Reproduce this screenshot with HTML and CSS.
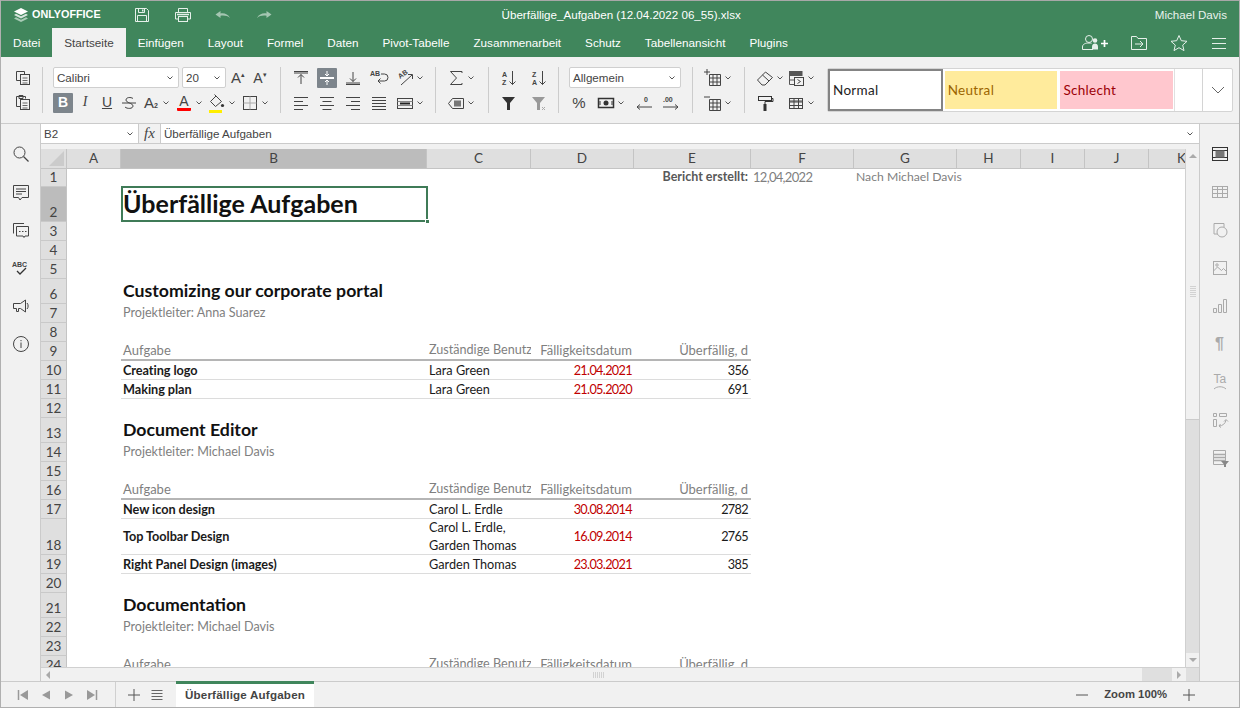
FILE: index.html
```html
<!DOCTYPE html>
<html lang="de">
<head>
<meta charset="utf-8">
<title>Überfällige Aufgaben</title>
<link rel="stylesheet" href="styles.css">
</head>
<body>
<svg class="defs" aria-hidden="true">
  <symbol id="caret" viewBox="0 0 10 20"><path d="M2.5 8.5 5 11l2.5-2.5" fill="none" stroke="#555" stroke-width="1"/></symbol>
  <symbol id="copy" viewBox="0 0 20 20"><path d="M11.500 6V3.500h-8v9H7" fill="none" stroke="#444"/><rect x="7.500" y="6.500" width="9" height="10" fill="#f1f1f1" stroke="#444"/><path d="M9.500 10h5M9.500 12.500h5M9.500 15h5" stroke="#666"/></symbol>
  <symbol id="paste" viewBox="0 0 20 20"><path d="M12.500 5.500v-2h-9v10H7M6 5.500h4V2.500H6z" fill="none" stroke="#444"/><rect x="7.500" y="6.500" width="9" height="10" fill="#f1f1f1" stroke="#444"/><path d="M9.500 10h5M9.500 12.500h5M9.500 15h5" stroke="#666"/></symbol>
  <symbol id="strike" viewBox="0 0 20 20"><path d="M14 5.500c-2-1.500-7-1.500-7 1.500 0 3 7 3 7 6 0 3-6 3-8 1M3 10h14" fill="none" stroke="#444"/></symbol>
  <symbol id="fill" viewBox="0 0 20 20"><path d="M3.500 8.500 9 3l5.500 5.500-6 5z" fill="none" stroke="#444"/><path d="m9 3-1.500-1.500" stroke="#444"/><circle cx="15.500" cy="12.500" r="1.600" fill="#333"/><rect x="2" y="17" width="13" height="3" fill="#ffee00"/></symbol>
  <symbol id="borders" viewBox="0 0 20 20"><rect x="3.500" y="3.500" width="13" height="13" fill="none" stroke="#444"/><path d="M10 3.500v13M3.500 10h13" stroke="#aaa"/></symbol>
  <symbol id="atop" viewBox="0 0 20 20"><path d="M3 3.500h14M3 5h14M10 16V6.500M7 9.500l3-3 3 3" fill="none" stroke="#444"/></symbol>
  <symbol id="amid" viewBox="0 0 20 20"><path d="M3 9.500h14M3 10.500h14M10 3v5M10 17v-5M8 6l2 2 2-2M8 14l2-2 2 2" fill="none" stroke="#fff"/></symbol>
  <symbol id="abot" viewBox="0 0 20 20"><path d="M3 16.500h14M3 15h14M10 4v9.500M7 10.500l3 3 3-3" fill="none" stroke="#444"/></symbol>
  <symbol id="al" viewBox="0 0 20 20"><path d="M3 4.500h14M3 8.500h9M3 12.500h14M3 16.500h9" stroke="#444"/></symbol>
  <symbol id="ac" viewBox="0 0 20 20"><path d="M3 4.500h14M5.500 8.500h9M3 12.500h14M5.500 16.500h9" stroke="#444"/></symbol>
  <symbol id="ar" viewBox="0 0 20 20"><path d="M3 4.500h14M8 8.500h9M3 12.500h14M8 16.500h9" stroke="#444"/></symbol>
  <symbol id="aj" viewBox="0 0 20 20"><path d="M3 4.500h14M3 7.500h14M3 10.500h14M3 13.500h14M3 16.500h14" stroke="#444"/></symbol>
  <symbol id="merge" viewBox="0 0 20 20"><rect x="2.500" y="5.500" width="15" height="10" fill="none" stroke="#444"/><path d="M2.500 8.500h15M2.500 12.500h15" stroke="#888"/><path d="M5 10.500h10" stroke="#222" stroke-width="2"/></symbol>
  <symbol id="sum" viewBox="0 0 20 20"><path d="M16 5V3.500H4.500L10.500 10l-6 6.500H16V15" fill="none" stroke="#444"/></symbol>
  <symbol id="named" viewBox="0 0 20 20"><path d="M6.500 5.500h11v10h-11L2.500 10.500z" fill="none" stroke="#444"/><rect x="8" y="7.500" width="7" height="6" fill="#777"/></symbol>
  <symbol id="filter" viewBox="0 0 20 20"><path d="M3 4h13l-5 6v7H8v-7z" fill="#333"/></symbol>
  <symbol id="unfilter" viewBox="0 0 20 20"><path d="M3 4h13l-5 6v7H8v-7z" fill="#999"/><path d="m13 14 3 3M16 14l-3 3" stroke="#aaa"/></symbol>
  <symbol id="money" viewBox="0 0 20 20"><rect x="2.500" y="5.500" width="15" height="9" fill="none" stroke="#333" stroke-width="1.500"/><circle cx="10" cy="10" r="2.500" fill="#333"/><path d="M4 8v4M16 8v4" stroke="#333"/></symbol>
  <symbol id="insc" viewBox="0 0 20 20"><path d="M6.500 6.500h11v11h-11zM10 6.500v11M14 6.500v11M6.500 10h11M6.500 14h11" fill="none" stroke="#444"/><path d="M1 4h6M4 1v6" stroke="#444"/></symbol>
  <symbol id="delc" viewBox="0 0 20 20"><path d="M6.500 6.500h11v11h-11zM10 6.500v11M14 6.500v11M6.500 10h11M6.500 14h11" fill="none" stroke="#444"/><path d="M1 4h6" stroke="#444"/></symbol>
  <symbol id="eraser" viewBox="0 0 20 20"><path d="m2.500 12 8-8 7 5.500-7.500 7.500H7z" fill="none" stroke="#444"/><path d="M7.500 7 14 13" stroke="#444"/></symbol>
  <symbol id="cond" viewBox="0 0 20 20"><path d="M3 3h13v5H3z" fill="#555"/><path d="M3.500 3v13.500h5M16 3v5M3.500 12h5" fill="none" stroke="#555"/><rect x="8.500" y="9.500" width="9" height="8" fill="#f1f1f1" stroke="#444"/><path d="m11.500 11.500 3 2-3 2" fill="none" stroke="#444"/></symbol>
  <symbol id="paint" viewBox="0 0 20 20"><rect x="3.500" y="3.500" width="13" height="4" fill="none" stroke="#333"/><path d="M16.500 5.500h1.500v3h-8V11" fill="none" stroke="#333"/><rect x="8.500" y="11" width="3" height="7" fill="#333"/></symbol>
  <symbol id="table" viewBox="0 0 20 20"><rect x="3.500" y="5.500" width="13" height="10" fill="none" stroke="#444"/><path d="M3.500 8h13v1H3.500zM8 5.500v10M12.500 5.500v10M3.500 12.500h13" fill="none" stroke="#444"/></symbol>

  <symbol id="logo" viewBox="0 0 16 16"><path d="M8 1 1 4.500 8 8l7-3.500z" fill="#fff"/><path d="M3 6.800 1 8l7 3.500L15 8l-2-1.200L8 9.300z" fill="#d7e6dd"/><path d="M3 10.300 1 11.500 8 15l7-3.500-2-1.200-5 2.500z" fill="#a9cbb6"/></symbol>
  <symbol id="save" viewBox="0 0 20 20"><path d="M3.500 3.500h11l2 2v11h-13z" fill="none" stroke="#e6f0ea"/><path d="M6.500 3.500v4h6v-4M5.500 16.500v-6h9v6" fill="none" stroke="#e6f0ea"/><path d="M10 4.500h1.500v2H10z" fill="#e6f0ea"/></symbol>
  <symbol id="print" viewBox="0 0 20 20"><path d="M5.500 7V3.500h9V7M5.500 14h-3V7.500h15V14h-3" fill="none" stroke="#e6f0ea"/><rect x="5.500" y="11.500" width="9" height="5" fill="none" stroke="#e6f0ea"/><path d="M4 9.500h12" stroke="#e6f0ea" stroke-width="1.500"/></symbol>
  <symbol id="undo" viewBox="0 0 20 20"><path d="M2.500 9.500 7.500 6v2.400c4-.6 7.500.7 9.500 4.600-2.500-2-5.500-2.800-9.500-2.200V13z" fill="#a5c6b2"/></symbol>
  <symbol id="redo" viewBox="0 0 20 20"><path d="M17.500 9.500 12.500 6v2.400c-4-.6-7.500.7-9.500 4.600 2.500-2 5.500-2.800 9.500-2.200V13z" fill="#a5c6b2"/></symbol>
  <symbol id="adduser" viewBox="0 0 28 20"><circle cx="8" cy="6" r="3.500" fill="none" stroke="#e6f0ea"/><path d="M1.500 16.500V14c0-3 3-4 6.500-4 1 0 2 .1 2.500.3M1.500 16.500H12" fill="none" stroke="#e6f0ea"/><circle cx="14" cy="7.500" r="2.300" fill="#e6f0ea"/><path d="M11 16.500v-3c0-2 1.500-3 3-3s3 1 3 3v3z" fill="#e6f0ea"/><path d="M20 10.500h7M23.500 7v7" stroke="#fff" stroke-width="1.700"/></symbol>
  <symbol id="folder" viewBox="0 0 20 20"><path d="M2.500 16.500v-13h5l1.500 2h8.500v11z" fill="none" stroke="#e6f0ea"/><path d="M6 11h8M11 8l3 3-3 3" fill="none" stroke="#e6f0ea"/></symbol>
  <symbol id="star" viewBox="0 0 20 20"><path d="m10 2.500 2.300 5.200 5.700.6-4.300 3.800 1.300 5.500-5-2.900-5 2.900 1.300-5.500L2 8.300l5.700-.6z" fill="none" stroke="#e6f0ea"/></symbol>
  <symbol id="menu" viewBox="0 0 20 20"><path d="M3 5.500h14M3 10.500h14M3 15.500h14" stroke="#e6f0ea"/></symbol>

  <symbol id="search" viewBox="0 0 20 20"><circle cx="8.500" cy="8.500" r="5.500" fill="none" stroke="#444"/><path d="m12.500 12.500 5 5" stroke="#444" stroke-width="1.200"/></symbol>
  <symbol id="comment" viewBox="0 0 20 20"><path d="M2.500 3.500h15v12H11l-2 2.500-1.500-2.500h-5z" fill="none" stroke="#444"/><path d="M5 7h10M5 9.500h10M5 12h6" stroke="#444"/></symbol>
  <symbol id="chat" viewBox="0 0 20 20"><path d="M13 3.500H2.500v10" fill="none" stroke="#444"/><path d="M5.500 6.500h12v9.500h-3.500l-1 1.500-1-1.500H5.500z" fill="none" stroke="#444"/><path d="M8 11.500h2M11 11.500h2M14 11.500h2" stroke="#444" stroke-dasharray="1.500 1"/></symbol>
  <symbol id="mega" viewBox="0 0 20 20"><path d="M2.500 7.500h7l5-3.500v12l-5-3.500h-2v3h-2v-3h-3z" fill="none" stroke="#444"/><path d="M16 7c1.500 1.500 1.500 4.500 0 6" fill="none" stroke="#444"/></symbol>
  <symbol id="info" viewBox="0 0 20 20"><circle cx="10" cy="10" r="7.500" fill="none" stroke="#444"/><path d="M10 8.500V14M10 6v1.200" stroke="#444"/></symbol>

  <symbol id="rcell" viewBox="0 0 20 20"><rect x="2.500" y="3.500" width="15" height="13" fill="none" stroke="#333"/><path d="M2.500 6.500h15M2.500 13.500h15" stroke="#333"/><rect x="5.500" y="6.500" width="9" height="7" fill="#777"/></symbol>
  <symbol id="rtable" viewBox="0 0 20 20"><rect x="2.500" y="4.500" width="15" height="11" fill="none" stroke="#aaa"/><path d="M2.500 7.500h15M2.500 11.500h15M7.500 4.500v11M12.500 4.500v11" stroke="#aaa"/></symbol>
  <symbol id="rshape" viewBox="0 0 20 20"><path d="M8 14H4V3.500h10V7" fill="none" stroke="#aaa"/><circle cx="12" cy="12" r="5" fill="#f1f1f1" stroke="#aaa"/></symbol>
  <symbol id="rimage" viewBox="0 0 20 20"><rect x="3.500" y="3.500" width="13" height="13" fill="none" stroke="#aaa"/><path d="m3.500 13 4-4 4 3.500 2-2 3 3" fill="none" stroke="#aaa"/><circle cx="7" cy="7" r="1.200" fill="none" stroke="#aaa"/></symbol>
  <symbol id="rchart" viewBox="0 0 20 20"><path d="M3.500 12.500h3v4h-3zM8.500 8.500h3v8h-3zM13.500 3.500h3v13h-3z" fill="none" stroke="#aaa"/></symbol>
  <symbol id="rpivot" viewBox="0 0 20 20"><path d="M3.500 3.500h3v3h-3zM9.500 3.500h7v3h-7zM3.500 9.500h3v7h-3z" fill="none" stroke="#aaa"/><path d="M9 16a7 7 0 0 0 7-6M14 11.500l2-2 2 2M10.500 14 9 16l2 1.500" fill="none" stroke="#aaa"/></symbol>
  <symbol id="rslicer" viewBox="0 0 20 20"><path d="M3.500 2.500h12v14h-12z" fill="none" stroke="#aaa"/><path d="M3.500 6.500h12M3.500 9.500h12M3.500 12.500h12" stroke="#aaa" stroke-width="1.300"/><path d="M11 13h8l-3 3.500V19h-2v-2.500z" fill="#888"/></symbol>

  <symbol id="nfirst" viewBox="0 0 12 12"><path d="M1.500 1v10" stroke="#999" stroke-width="1.500"/><path d="M11 1v10L3 6z" fill="#999"/></symbol>
  <symbol id="nprev" viewBox="0 0 12 12"><path d="M10 1.500v9L2 6z" fill="#999"/></symbol>
  <symbol id="nnext" viewBox="0 0 12 12"><path d="M2 1.500v9L10 6z" fill="#999"/></symbol>
  <symbol id="nlast" viewBox="0 0 12 12"><path d="M10.500 1v10" stroke="#999" stroke-width="1.500"/><path d="M1 1v10l8-5z" fill="#999"/></symbol>
  <symbol id="plus" viewBox="0 0 14 14"><path d="M7 1v12M1 7h12" stroke="#555"/></symbol>
  <symbol id="list" viewBox="0 0 14 14"><path d="M1.500 2.500h11M1.500 5.500h11M1.500 8.500h11M1.500 11.500h11" stroke="#666"/></symbol>
  <symbol id="minus" viewBox="0 0 14 14"><path d="M1 7h12" stroke="#555"/></symbol>
</svg>

<div class="app">
  <header class="title">
    <div class="brand"><svg class="logo"><use href="#logo"/></svg><span>ONLYOFFICE</span></div>
    <div class="quick">
      <svg class="ic"><use href="#save"/></svg>
      <svg class="ic"><use href="#print"/></svg>
      <svg class="ic"><use href="#undo"/></svg>
      <svg class="ic"><use href="#redo"/></svg>
    </div>
    <div class="docname">Überfällige_Aufgaben (12.04.2022 06_55).xlsx</div>
    <div class="user">Michael Davis</div>
  </header>

  <nav class="tabs">
    <span class="tab">Datei</span>
    <span class="tab on">Startseite</span>
    <span class="tab">Einfügen</span>
    <span class="tab">Layout</span>
    <span class="tab">Formel</span>
    <span class="tab">Daten</span>
    <span class="tab">Pivot-Tabelle</span>
    <span class="tab">Zusammenarbeit</span>
    <span class="tab">Schutz</span>
    <span class="tab">Tabellenansicht</span>
    <span class="tab">Plugins</span>
    <div class="tabtools">
      <svg class="ic wide"><use href="#adduser"/></svg>
      <svg class="ic"><use href="#folder"/></svg>
      <svg class="ic"><use href="#star"/></svg>
      <svg class="ic"><use href="#menu"/></svg>
    </div>
  </nav>

  <section class="toolbar">
    <div class="grp g1">
      <div class="tr"><svg class="ic"><use href="#copy"/></svg></div>
      <div class="tr"><svg class="ic"><use href="#paste"/></svg></div>
    </div>
    <i class="sep"></i>
    <div class="grp g2">
      <div class="tr">
        <div class="combo font"><span>Calibri</span><svg class="car"><use href="#caret"/></svg></div>
        <div class="combo size"><span>20</span><svg class="car"><use href="#caret"/></svg></div>
        <span class="b glyph">A<sup>▴</sup></span>
        <span class="b glyph small">A<sup>▾</sup></span>
      </div>
      <div class="tr">
        <span class="b letter active strong">B</span>
        <span class="b letter ital">I</span>
        <span class="b letter under">U</span>
        <svg class="ic"><use href="#strike"/></svg>
        <span class="sp"><span class="b glyph sub">A<sub>2</sub></span><svg class="car"><use href="#caret"/></svg></span>
        <span class="sp"><span class="b glyph red">A</span><svg class="car"><use href="#caret"/></svg></span>
        <span class="sp"><svg class="ic"><use href="#fill"/></svg><svg class="car"><use href="#caret"/></svg></span>
        <span class="sp"><svg class="ic"><use href="#borders"/></svg><svg class="car"><use href="#caret"/></svg></span>
      </div>
    </div>
    <i class="sep"></i>
    <div class="grp g3">
      <div class="tr">
        <svg class="ic"><use href="#atop"/></svg>
        <span class="b active"><svg class="ic"><use href="#amid"/></svg></span>
        <svg class="ic"><use href="#abot"/></svg>
        <svg class="ic" viewBox="0 0 20 20"><text x="1" y="8" class="tiny">AB</text><path d="M12 6h3.500a3 3 0 0 1 0 7H9M11.500 10.500 9 13l2.500 2.500" fill="none" stroke="#444"/></svg>
        <span class="sp"><svg class="ic" viewBox="0 0 20 20"><text class="tiny" transform="translate(5 11) rotate(-35)">AB</text><path d="M6 17 17 7M13 6.500h4.500V11" fill="none" stroke="#444"/></svg><svg class="car"><use href="#caret"/></svg></span>
      </div>
      <div class="tr">
        <svg class="ic"><use href="#al"/></svg>
        <svg class="ic"><use href="#ac"/></svg>
        <svg class="ic"><use href="#ar"/></svg>
        <svg class="ic"><use href="#aj"/></svg>
        <span class="sp"><svg class="ic"><use href="#merge"/></svg><svg class="car"><use href="#caret"/></svg></span>
      </div>
    </div>
    <i class="sep"></i>
    <div class="grp g4">
      <div class="tr"><span class="sp"><svg class="ic"><use href="#sum"/></svg><svg class="car"><use href="#caret"/></svg></span></div>
      <div class="tr"><span class="sp"><svg class="ic"><use href="#named"/></svg><svg class="car"><use href="#caret"/></svg></span></div>
    </div>
    <i class="sep"></i>
    <div class="grp g5">
      <div class="tr">
        <svg class="ic" viewBox="0 0 20 20"><text x="3" y="9" class="tiny">A</text><text x="3" y="17" class="tiny">Z</text><path d="M13.500 3v13.500M10.500 13.500l3 3 3-3" fill="none" stroke="#444"/></svg>
        <svg class="ic" viewBox="0 0 20 20"><text x="3" y="9" class="tiny">Z</text><text x="3" y="17" class="tiny">A</text><path d="M13.500 3v13.500M10.500 13.500l3 3 3-3" fill="none" stroke="#444"/></svg>
      </div>
      <div class="tr"><svg class="ic"><use href="#filter"/></svg><svg class="ic"><use href="#unfilter"/></svg></div>
    </div>
    <i class="sep"></i>
    <div class="grp g6">
      <div class="tr"><div class="combo fmt"><span>Allgemein</span><svg class="car"><use href="#caret"/></svg></div></div>
      <div class="tr numrow">
        <span class="b pct">%</span>
        <span class="sp"><svg class="ic"><use href="#money"/></svg><svg class="car"><use href="#caret"/></svg></span>
        <svg class="ic" viewBox="0 0 20 20"><text x="10" y="9" class="tiny">0</text><path d="M18 14H3M6 11.500 3 14l3 2.500" fill="none" stroke="#444"/></svg>
        <svg class="ic" viewBox="0 0 20 20"><text x="2" y="9" class="tiny">.00</text><path d="M2 14h15M14 11.500l3 2.500-3 2.500" fill="none" stroke="#444"/></svg>
      </div>
    </div>
    <i class="sep"></i>
    <div class="grp g7">
      <div class="tr"><span class="sp"><svg class="ic"><use href="#insc"/></svg><svg class="car"><use href="#caret"/></svg></span></div>
      <div class="tr"><span class="sp"><svg class="ic"><use href="#delc"/></svg><svg class="car"><use href="#caret"/></svg></span></div>
    </div>
    <i class="sep"></i>
    <div class="grp g8">
      <div class="tr"><span class="sp"><svg class="ic"><use href="#eraser"/></svg><svg class="car"><use href="#caret"/></svg></span><span class="sp"><svg class="ic"><use href="#cond"/></svg><svg class="car"><use href="#caret"/></svg></span></div>
      <div class="tr"><span class="sp"><svg class="ic"><use href="#paint"/></svg><i class="nocar"></i></span><span class="sp"><svg class="ic"><use href="#table"/></svg><svg class="car"><use href="#caret"/></svg></span></div>
    </div>
    <div class="styles">
      <div class="st normal">Normal</div>
      <div class="st neutral">Neutral</div>
      <div class="st bad">Schlecht</div>
      <div class="st blank"></div>
      <div class="st more"><svg viewBox="0 0 14 8"><path d="m1 1 6 6 6-6" fill="none" stroke="#666"/></svg></div>
    </div>
  </section>

  <main class="main">
    <aside class="side left">
      <svg class="ic"><use href="#search"/></svg>
      <svg class="ic"><use href="#comment"/></svg>
      <svg class="ic"><use href="#chat"/></svg>
      <svg class="ic" viewBox="0 0 20 20"><text x="1" y="9" class="tiny">ABC</text><path d="m6 13 3 3 6-6" fill="none" stroke="#333" stroke-width="1.300"/></svg>
      <svg class="ic"><use href="#mega"/></svg>
      <svg class="ic"><use href="#info"/></svg>
    </aside>

    <div class="center">
      <div class="formula">
        <div class="namebox"><span>B2</span><svg class="car"><use href="#caret"/></svg></div>
        <div class="fx">fx</div>
        <div class="input"><span>Überfällige Aufgaben</span><svg class="car"><use href="#caret"/></svg></div>
      </div>
      <div class="work">
        <div class="sheet">
          <div class="row head">
            <div class="corner"></div>
            <div class="ch">A</div><div class="ch sel">B</div><div class="ch">C</div><div class="ch">D</div><div class="ch">E</div><div class="ch">F</div><div class="ch">G</div><div class="ch">H</div><div class="ch">I</div><div class="ch">J</div><div class="ch kk">K</div>
          </div>
          <div class="row"><div class="rh">1</div><div></div><div></div><div></div><div></div><div class="c right top meta strong">Bericht erstellt:</div><div class="c top meta num">12,04,2022</div><div class="c top meta wide-left">Nach Michael Davis</div></div>
          <div class="row r35"><div class="rh sel">2</div><div></div><div class="c active-cell"><span class="h1">Überfällige Aufgaben</span><i class="handle"></i></div></div>
          <div class="row"><div class="rh">3</div></div>
          <div class="row"><div class="rh">4</div></div>
          <div class="row"><div class="rh">5</div></div>
          <div class="row r25"><div class="rh">6</div><div></div><div class="c h2">Customizing our corporate portal</div></div>
          <div class="row"><div class="rh">7</div><div></div><div class="c lead">Projektleiter: Anna Suarez</div></div>
          <div class="row"><div class="rh">8</div></div>
          <div class="row"><div class="rh">9</div><div></div><div class="c th">Aufgabe</div><div class="c th clip">Zuständige Benutzer</div><div class="c th right">Fälligkeitsdatum</div><div class="c th right">Überfällig, d</div></div>
          <div class="row"><div class="rh">10</div><div></div><div class="c td strong">Creating logo</div><div class="c td">Lara Green</div><div class="c td right late num">21.04.2021</div><div class="c td right num">356</div></div>
          <div class="row"><div class="rh">11</div><div></div><div class="c td strong">Making plan</div><div class="c td">Lara Green</div><div class="c td right late num">21.05.2020</div><div class="c td right num">691</div></div>
          <div class="row"><div class="rh">12</div></div>
          <div class="row r25"><div class="rh">13</div><div></div><div class="c h2">Document Editor</div></div>
          <div class="row"><div class="rh">14</div><div></div><div class="c lead">Projektleiter: Michael Davis</div></div>
          <div class="row"><div class="rh">15</div></div>
          <div class="row"><div class="rh">16</div><div></div><div class="c th">Aufgabe</div><div class="c th clip">Zuständige Benutzer</div><div class="c th right">Fälligkeitsdatum</div><div class="c th right">Überfällig, d</div></div>
          <div class="row"><div class="rh">17</div><div></div><div class="c td strong">New icon design</div><div class="c td">Carol L. Erdle</div><div class="c td right late num">30.08.2014</div><div class="c td right num">2782</div></div>
          <div class="row r36"><div class="rh">18</div><div></div><div class="c td strong mid">Top Toolbar Design</div><div class="c td multi">Carol L. Erdle,<br>Garden Thomas</div><div class="c td right late mid num">16.09.2014</div><div class="c td right mid num">2765</div></div>
          <div class="row"><div class="rh">19</div><div></div><div class="c td strong">Right Panel Design (images)</div><div class="c td">Garden Thomas</div><div class="c td right late num">23.03.2021</div><div class="c td right num">385</div></div>
          <div class="row"><div class="rh">20</div></div>
          <div class="row r25"><div class="rh">21</div><div></div><div class="c h2">Documentation</div></div>
          <div class="row"><div class="rh">22</div><div></div><div class="c lead">Projektleiter: Michael Davis</div></div>
          <div class="row"><div class="rh">23</div></div>
          <div class="row"><div class="rh">24</div><div></div><div class="c th">Aufgabe</div><div class="c th clip">Zuständige Benutzer</div><div class="c th right">Fälligkeitsdatum</div><div class="c th right">Überfällig, d</div></div>
        </div>
        <div class="vscroll">
          <div class="sbtn"><i class="tri up"></i></div>
          <div class="vthumb"><i class="grip v"></i></div>
          <div class="vtrack"></div>
          <div class="sbtn"><i class="tri down"></i></div>
        </div>
      </div>
      <div class="hscroll">
        <div class="sbtn h"><i class="tri lft"></i></div>
        <div class="hthumb"><i class="grip h"></i></div>
        <div class="htrack"></div>
        <div class="sbtn h"><i class="tri rgt"></i></div>
        <div class="hend"></div>
      </div>
    </div>

    <aside class="side right-side">
      <svg class="ic"><use href="#rcell"/></svg>
      <svg class="ic"><use href="#rtable"/></svg>
      <svg class="ic"><use href="#rshape"/></svg>
      <svg class="ic"><use href="#rimage"/></svg>
      <svg class="ic"><use href="#rchart"/></svg>
      <span class="pilcrow">¶</span>
      <svg class="ic" viewBox="0 0 20 20"><text x="3.500" y="11" class="ta">Ta</text><path d="M4 17c3-3 9-3 12 0" fill="none" stroke="#aaa"/></svg>
      <svg class="ic"><use href="#rpivot"/></svg>
      <svg class="ic"><use href="#rslicer"/></svg>
    </aside>
  </main>

  <footer class="status">
    <div class="nav">
      <svg class="nb"><use href="#nfirst"/></svg>
      <svg class="nb"><use href="#nprev"/></svg>
      <svg class="nb"><use href="#nnext"/></svg>
      <svg class="nb"><use href="#nlast"/></svg>
    </div>
    <div class="sheetbtns">
      <svg class="nb big"><use href="#plus"/></svg>
      <svg class="nb big"><use href="#list"/></svg>
    </div>
    <div class="sheettab">Überfällige Aufgaben</div>
    <div class="zoom">
      <svg class="nb big"><use href="#minus"/></svg>
      <span class="zlabel">Zoom 100%</span>
      <svg class="nb big"><use href="#plus"/></svg>
    </div>
  </footer>
</div>
</body>
</html>
```
FILE: styles.css
```css
* { box-sizing: border-box; }
html, body { margin: 0; padding: 0; }
body { width: 1240px; height: 708px; overflow: hidden; font: 11.600px/1.2 "Liberation Sans", Arial, sans-serif; color: #444; background: #f1f1f1; }
.defs { width: 0; height: 0; position: absolute; }
.tiny { font: 700 7px "Liberation Sans", sans-serif; fill: #444; }
.ta { font: 12px "Liberation Sans", sans-serif; fill: #aaa; }

.app { width: 1240px; height: 708px; display: flex; flex-direction: column; overflow: hidden; border-left: 1px solid #b0b0b0; border-right: 1px solid #b0b0b0; border-bottom: 1px solid #b0b0b0; }
.ic { width: 20px; height: 20px; flex: none; display: block; }
.ic.wide { width: 28px; }
.car { width: 10px; height: 20px; flex: none; display: block; }

/* title */
.title { height: 28px; flex: none; background: #40865c; border-top: 1px solid #a8a8a8; display: flex; align-items: center; color: #fff; padding-left: 12px; }
.brand { display: flex; align-items: center; gap: 3px; width: 119px; font-size: 10.800px; font-weight: 700; }
.logo { width: 16px; height: 16px; }
.quick { display: flex; gap: 20.500px; }
.docname { flex: 1; text-align: center; padding-right: 186px; }
.user { padding-right: 12px; color: #e9f2ec; }

/* tabs */
.tabs { height: 29px; flex: none; background: #40865c; display: flex; align-items: stretch; color: #fff; }
.tab { padding: 0 12px; line-height: 30px; font-size: 11.700px; }
.tab.on { background: #f1f1f1; color: #444; }
.tabtools { margin-left: auto; display: flex; align-items: center; gap: 20px; padding-right: 10px; }

/* toolbar */
.toolbar { height: 67px; flex: none; background: #f1f1f1; border-bottom: 1px solid #cbcbcb; display: flex; align-items: flex-start; gap: 10px; padding: 10px 0 0 12px; }
.sep { width: 1px; height: 46px; background: #ccc; flex: none; }
.grp { display: flex; flex-direction: column; gap: 4px; flex: none; }
.tr { display: flex; align-items: center; height: 21px; gap: 2px; }
.g1 { width: 19px; }
.g2 { width: 217px; }
.g3 { width: 134px; }
.g3 .tr { gap: 6px; }
.g4 { width: 32px; }
.g5 { width: 49px; }
.g5 .tr { gap: 10px; }
.g6 { width: 113px; }
.numrow { gap: 0; justify-content: space-between; padding-right: 1px; }
.g7 { width: 31px; }
.g8 { width: 62px; }
.g8 .tr { gap: 0; }
.sp { display: flex; align-items: center; width: 31px; flex: none; }
.nocar { width: 11px; flex: none; }
.combo { height: 21px; background: #fff; border: 1px solid #cfcfcf; border-radius: 2px; display: flex; align-items: center; justify-content: space-between; padding: 0 3px; flex: none; color: #444; }
.combo.font { width: 126px; margin-right: 1px; }
.combo.size { width: 44px; }
.combo.fmt { width: 112px; }
.b { width: 20px; height: 20px; display: flex; align-items: center; justify-content: center; flex: none; border-radius: 1px; }
.b.active { background: #7d858c; color: #fff; }
.letter { font-size: 14px; }
.strong { font-weight: 700; }
.ital { font-family: "Liberation Serif", serif; font-style: italic; }
.under { text-decoration: underline; }
.glyph { font-size: 15px; line-height: 1; }
.glyph.small { font-size: 14px; }
.glyph sup { font-size: 7px; margin-top: -6px; }
.sub sub { font-size: 7px; font-weight: 700; margin-top: 6px; }
.red { border-bottom: 3px solid #ff0000; height: 17px; width: 14px; margin: 0 3px; font-size: 14px; }
.pct { font-size: 15px; }

/* styles gallery */
.styles { width: 406px; height: 44px; display: flex; align-items: stretch; background: #fff; border: 1px solid #d4d4d4; border-radius: 2px; font: 13.500px "Lato", sans-serif; letter-spacing: .3px; flex: none; margin-top: 1px; }
.st { display: flex; align-items: center; padding-left: 3px; }
.normal { width: 115px; border: 2px solid #848484; background: #fff; color: #222; }
.neutral { width: 113px; margin: 2px 1px 2px 2px; background: #ffeb9c; color: #9c6500; }
.bad { width: 113px; margin: 2px 1px 2px 2px; background: #ffc7ce; color: #9c0006; }
.blank { width: 28px; padding: 0; border-left: 1px solid #e0e0e0; }
.more { width: 30px; padding: 0; justify-content: center; border-left: 1px solid #d4d4d4; }
.more svg { width: 14px; height: 8px; }

/* main */
.main { flex: 1; min-height: 0; display: flex; }
.side { width: 40px; flex: none; background: #f1f1f1; display: flex; flex-direction: column; align-items: center; gap: 18px; padding-top: 20px; border-right: 1px solid #cbcbcb; }
.right-side { border-right: 0; border-left: 1px solid #cbcbcb; padding-top: 20px; }
.pilcrow { height: 20px; width: 20px; text-align: center; font-size: 16px; line-height: 20px; color: #aaa; font-weight: 700; }
.center { flex: 1; min-width: 0; display: flex; flex-direction: column; }

.formula { height: 20px; flex: none; display: flex; background: #f1f1f1; border-bottom: 1px solid #cbcbcb; margin-bottom: 5px; }
.namebox { width: 98px; background: #fff; display: flex; justify-content: space-between; align-items: center; padding: 0 3px; flex: none; border-right: 1px solid #cbcbcb; }
.fx { width: 22px; flex: none; font: italic 15px/19px "Liberation Serif", serif; text-align: center; border-right: 1px solid #cbcbcb; }
.input { flex: 1; background: #fff; display: flex; justify-content: space-between; align-items: center; padding: 0 4px 0 3px; }

.work { flex: 1; min-height: 0; display: flex; }
.sheet { flex: 1; min-width: 0; overflow: hidden; background: #fff; font: 13px/16px "Lato", sans-serif; color: #111; }
.row { display: grid; grid-template-columns: 26px 54px 306px 104px 103px 117px 103px 103px 64px 64px 64px 37px; height: 19px; }
.r25 { height: 25px; }
.r35 { height: 35px; }
.r36 { height: 36px; }
.corner { background: #dfdfdf; border-right: 1px solid #c4c4c4; border-bottom: 1px solid #c4c4c4; position: relative; }
.corner::after { content: ""; position: absolute; right: 2px; bottom: 2px; border-style: solid; border-width: 0 0 15px 15px; border-color: transparent transparent #cbcbcb transparent; }
.ch { background: #dfdfdf; border-right: 1px solid #c4c4c4; border-bottom: 1px solid #c4c4c4; text-align: center; font-size: 13.500px; line-height: 19px; color: #444; }
.ch.sel { background: #bcbcbc; }
.ch.kk { text-align: right; border-right: 0; }
.rh { background: #dfdfdf; border-right: 1px solid #c4c4c4; border-bottom: 1px solid #c9c9c9; display: flex; align-items: flex-end; justify-content: center; font-size: 13.500px; line-height: 18px; color: #444; }
.rh.sel { background: #bcbcbc; }
.c { display: flex; align-items: flex-end; padding: 0 2px 1px; white-space: nowrap; overflow: hidden; min-width: 0; font-size: 13px; }
.right { justify-content: flex-end; }
.row > .right:nth-child(6) { padding-right: 3px; }
.top { padding-bottom: 2px; font-size: 12.200px; }
.meta { color: #7f7f7f; }
.meta.strong { color: #595959; font-weight: 700; font-size: 12.500px; }
.wide-left { overflow: visible; }
.lead { color: #7f7f7f; font-size: 12.600px; padding-bottom: 2px; }
.h2 { font-size: 17.700px; font-weight: 700; line-height: 20px; color: #111; overflow: visible; padding-bottom: 3px; }
.th { color: #7f7f7f; border-bottom: 2px solid #b5b5b5; padding-bottom: 1px; }
.clip { font-size: 12.600px; }
.td { color: #1a1a1a; border-bottom: 1px solid #dcdcdc; font-size: 12.700px; padding-bottom: 1px; }
.td.strong { font-weight: 700; letter-spacing: -.05px; }
.num { letter-spacing: -.65px; }
.top.num { font-size: 13px; letter-spacing: -.7px; }
.late { color: #c00000; }
.mid { align-items: center; padding-bottom: 1px; }
.multi { white-space: normal; line-height: 18px; align-items: center; padding-bottom: 2px; }
.active-cell { position: relative; overflow: visible; border: 2px solid #3f7b57; margin: -1px -1px 0 0; align-items: center; padding: 0 0 2px; }
.h1 { font-size: 25px; font-weight: 700; line-height: 30px; color: #111; }
.handle { position: absolute; right: -4px; bottom: -4px; width: 5px; height: 5px; background: #3f7b57; border: 1px solid #fff; }

/* scrollbars */
.vscroll { width: 14px; flex: none; background: #dfdfdf; border-left: 1px solid #d0d0d0; display: flex; flex-direction: column; }
.sbtn { height: 14px; background: #f1f1f1; display: flex; align-items: center; justify-content: center; flex: none; }
.vthumb { height: 257px; flex: none; background: #f1f1f1; border-bottom: 1px solid #cbcbcb; display: flex; align-items: center; justify-content: center; }
.vtrack { flex: 1; }
.hscroll { height: 14px; flex: none; background: #dfdfdf; border-top: 1px solid #d0d0d0; display: flex; }
.sbtn.h { width: 14px; height: auto; }
.hthumb { width: 1087px; flex: none; background: #f1f1f1; display: flex; align-items: center; justify-content: center; }
.htrack { width: 30px; flex: none; }
.hend { flex: 1; background: #dfdfdf; }
.grip { display: block; background: repeating-linear-gradient(90deg, #d2d2d2 0 1px, transparent 1px 2px); }
.grip.h { width: 12px; height: 6px; }
.grip.v { width: 6px; height: 12px; background: repeating-linear-gradient(0deg, #d2d2d2 0 1px, transparent 1px 2px); }
.tri { width: 0; height: 0; border: 4px solid transparent; display: block; }
.tri.up { border-bottom-color: #aaa; border-top-width: 0; }
.tri.down { border-top-color: #aaa; border-bottom-width: 0; }
.tri.lft { border-right-color: #aaa; border-left-width: 0; }
.tri.rgt { border-left-color: #aaa; border-right-width: 0; }

/* status */
.status { height: 26px; flex: none; background: #f1f1f1; border-top: 1px solid #cbcbcb; display: flex; align-items: stretch; }
.nb { width: 12px; height: 12px; flex: none; display: block; }
.nb.big { width: 14px; height: 14px; }
.nav { width: 115px; display: flex; align-items: center; gap: 11px; padding-left: 16px; border-right: 1px solid #d0d0d0; flex: none; }
.sheetbtns { width: 60px; display: flex; align-items: center; gap: 9px; padding-left: 11px; flex: none; }
.sheettab { width: 138px; background: #fff; border-top: 3px solid #40865c; font-weight: 700; text-align: center; line-height: 21px; color: #444; letter-spacing: .2px; flex: none; margin-top: -1px; }
.zoom { margin-left: auto; display: flex; align-items: center; padding-right: 43px; gap: 15px; }
.zlabel { font-size: 11.300px; font-weight: 700; color: #444; }
```
